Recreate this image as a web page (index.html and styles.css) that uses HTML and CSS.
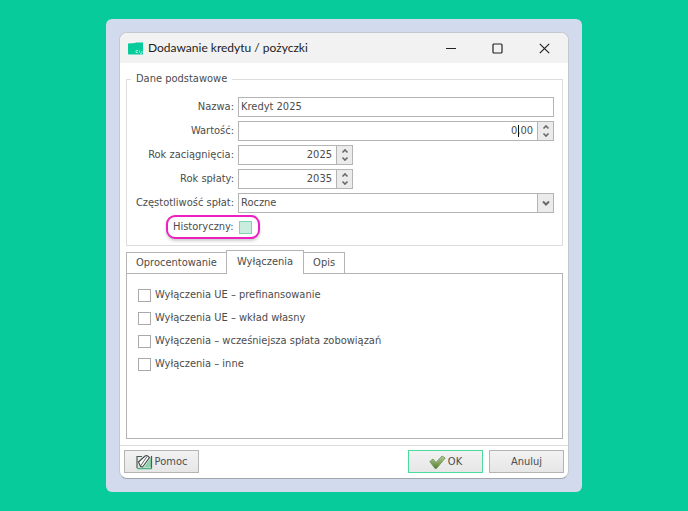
FILE: index.html
```html
<!DOCTYPE html>
<html lang="pl">
<head>
    <meta charset="UTF-8">
    <meta name="viewport" content="width=device-width, initial-scale=1">
    <title>Dodawanie kredytu / pożyczki</title>
    <link rel="stylesheet" href="styles.css">
</head>
<body>
    <main class="backdrop">
        <form class="window">
            <header class="titlebar">
                <svg class="app-icon" viewBox="0 0 16 13" aria-hidden="true">
                    <path d="M0 1.500 L7 1 L8 .5 H15 V12.500 H.5 L0 12 Z" fill="#08cb9c"/>
                    <path d="M8 8.500h2M8 8.500v2h2M11.500 8.500v2M14 9v2l-2 .5" fill="none" stroke="#b5f0e0" stroke-width=".8"/>
                </svg>
                <h1 class="title">Dodawanie kredytu / pożyczki</h1>
                <button type="button" class="window-button" aria-label="Minimalizuj">
                    <svg viewBox="0 0 11 11"><path d="M1 5.500h10"/></svg>
                </button>
                <button type="button" class="window-button" aria-label="Maksymalizuj">
                    <svg viewBox="0 0 11 11"><rect x="1" y="1" width="9" height="9" rx="1"/></svg>
                </button>
                <button type="button" class="window-button" aria-label="Zamknij">
                    <svg viewBox="0 0 11 11"><path d="M.8.8l9.400 9.400M10.200.8L.8 10.200"/></svg>
                </button>
            </header>

            <div class="content">
                <fieldset class="group">
                    <legend>Dane podstawowe</legend>
                    <div class="row">
                        <label for="name">Nazwa:</label>
                        <div class="field"><input type="text" id="name" value="Kredyt 2025"></div>
                    </div>
                    <div class="row">
                        <label for="amount">Wartość:</label>
                        <div class="field">
                            <input type="text" id="amount" class="number" value="0,00">
                            <span class="caret"></span>
                            <button type="button" class="spin" aria-label="Zmień wartość">
                                <svg viewBox="0 0 8 14"><path d="M1.500 4.500L4 2l2.500 2.500M1.500 9.500L4 12l2.500-2.500"/></svg>
                            </button>
                        </div>
                    </div>
                    <div class="row">
                        <label for="yearFrom">Rok zaciągnięcia:</label>
                        <div class="field short">
                            <input type="text" id="yearFrom" class="number" value="2025">
                            <button type="button" class="spin" aria-label="Zmień rok zaciągnięcia">
                                <svg viewBox="0 0 8 14"><path d="M1.500 4.500L4 2l2.500 2.500M1.500 9.500L4 12l2.500-2.500"/></svg>
                            </button>
                        </div>
                    </div>
                    <div class="row">
                        <label for="yearTo">Rok spłaty:</label>
                        <div class="field short">
                            <input type="text" id="yearTo" class="number" value="2035">
                            <button type="button" class="spin" aria-label="Zmień rok spłaty">
                                <svg viewBox="0 0 8 14"><path d="M1.500 4.500L4 2l2.500 2.500M1.500 9.500L4 12l2.500-2.500"/></svg>
                            </button>
                        </div>
                    </div>
                    <div class="row">
                        <label for="frequency">Częstotliwość spłat:</label>
                        <div class="field">
                            <select id="frequency">
                                <option>Roczne</option>
                            </select>
                            <span class="spin arrow">
                                <svg viewBox="0 0 8 14"><path d="M1 5.500L4 8.500l3-3"/></svg>
                            </span>
                        </div>
                    </div>
                    <div class="row">
                        <div class="highlight">
                            <label for="historic">Historyczny:</label>
                            <input type="checkbox" id="historic" class="check tinted">
                        </div>
                    </div>
                </fieldset>

                <div class="tabs" role="tablist">
                    <button type="button" class="tab" role="tab">Oprocentowanie</button>
                    <button type="button" class="tab active" role="tab" aria-selected="true">Wyłączenia</button>
                    <button type="button" class="tab" role="tab">Opis</button>
                </div>
                <div class="pane" role="tabpanel">
                    <label class="option"><input type="checkbox" class="check">Wyłączenia UE – prefinansowanie</label>
                    <label class="option"><input type="checkbox" class="check">Wyłączenia UE – wkład własny</label>
                    <label class="option"><input type="checkbox" class="check">Wyłączenia – wcześniejsza spłata zobowiązań</label>
                    <label class="option"><input type="checkbox" class="check">Wyłączenia – inne</label>
                </div>
            </div>

            <footer class="footer">
                <button type="button" class="button help">
                    <svg class="button-icon" viewBox="0 0 17 16" aria-hidden="true">
                        <path d="M1 2.500h14.500v11.500H1z" fill="#dcefe6"/>
                        <path d="M8 13l7.500-10v10z" fill="#8fd3ac"/>
                        <path d="M1 14V2.500h5M15.500 2v12" fill="none" stroke="#555" stroke-width="1.2"/>
                        <path d="M1 14.500h15" stroke="#4faf83" stroke-width="1.600"/>
                        <path d="M2.500 8l2 4.500 2 .5L13.500 3.500 11 1.500 9 2z" fill="#fff" stroke="#444" stroke-width="1.1"/>
                        <path d="M4.500 12L11 2.500" fill="none" stroke="#555" stroke-width=".9"/>
                    </svg>
                    Pomoc
                </button>
                <button type="submit" class="button primary">
                    <svg class="button-icon" viewBox="0 0 17 16" aria-hidden="true">
                        <defs>
                            <linearGradient id="tick" x1="0" y1="0" x2="0" y2="1">
                                <stop offset="0" stop-color="#b5cf9d"/>
                                <stop offset="1" stop-color="#54802f"/>
                            </linearGradient>
                        </defs>
                        <path d="M.8 7.500l3.200-2.500 3 3.500 6-6.500 3.200 2-8.700 10.500H6z" fill="url(#tick)" stroke="#6f8f54" stroke-width=".8"/>
                    </svg>
                    OK
                </button>
                <button type="button" class="button">Anuluj</button>
            </footer>
        </form>
    </main>
</body>
</html>
```
FILE: styles.css
```css
* {
    box-sizing: border-box;
}

body {
    margin: 0;
    padding: 19px;
    background-color: #08cb9c;
    font-family: "DejaVu Sans Condensed", "Noto Sans", sans-serif;
    font-size: 11px;
    line-height: 16px;
    color: #4c4c4c;
}

button,
input,
select {
    margin: 0;
    font: inherit;
    color: inherit;
}

.backdrop {
    max-width: 476px;
    margin: 0 auto;
    padding: 13px;
    background-color: #d2dbed;
    border-radius: 6px;
}

.window {
    border: 1px solid #c4c8d0;
    border-bottom-color: #a2a5aa;
    border-radius: 8px;
    background-color: #fff;
    overflow: hidden;
}

.titlebar {
    display: flex;
    align-items: center;
    height: 30px;
    padding-left: 8px;
    background-color: #f2f2f2;
}

.app-icon {
    width: 16px;
    height: 13px;
    margin-right: 4px;
}

.title {
    flex: 1;
    margin: 0;
    font-family: Lato, "Noto Sans", sans-serif;
    font-size: 12px;
    font-weight: 400;
    color: #1c1c1c;
}

.window-button {
    width: 47px;
    height: 30px;
    padding: 0;
    border: none;
    background: none;
}

.window-button svg {
    display: block;
    width: 11px;
    height: 11px;
    margin: 0 auto;
    fill: none;
    stroke: #222;
    stroke-width: 1.2;
}

.content {
    padding: 8px 5px 6px 6px;
}

/* Basic data */
.group {
    display: flex;
    flex-direction: column;
    gap: 4px;
    margin: 0;
    padding: 10px 8px 8px;
    border: 1px solid #dcdcdc;
}

.group legend {
    padding: 0 5px;
    margin-left: -4px;
}

.row {
    display: flex;
    align-items: center;
    min-height: 20px;
}

.row > label {
    width: 99px;
    margin-right: 4px;
    text-align: right;
    white-space: nowrap;
}

.field {
    position: relative;
    display: flex;
    flex: 1;
    height: 20px;
    border: 1px solid #b4b4b4;
    background-color: #fff;
}

.field.short {
    flex: none;
    width: 115px;
}

.field input,
.field select {
    flex: 1;
    min-width: 0;
    padding: 0 2px;
    border: none;
    outline: none;
    background: none;
    appearance: none;
}

.field .number {
    padding-right: 4px;
    text-align: right;
}

.caret {
    position: absolute;
    top: 3px;
    right: 34px;
    width: 1px;
    height: 12px;
    background-color: #111;
}

.spin {
    display: flex;
    align-items: center;
    justify-content: center;
    width: 16px;
    padding: 0;
    border: none;
    border-left: 1px solid #b4b4b4;
    background-color: #ebebeb;
}

.spin svg {
    width: 8px;
    height: 14px;
    fill: none;
    stroke: #6a6a6a;
    stroke-width: 1.6;
}

.arrow {
    pointer-events: none;
}

.arrow svg {
    stroke-width: 2;
}

.highlight {
    display: flex;
    align-items: center;
    gap: 5px;
    height: 24px;
    margin: -2px 0 -2px 31px;
    padding: 0 6px 0 5px;
    border: 2px solid #ee1fc0;
    border-radius: 9px;
    background-color: #fff;
    box-shadow: 0 2px 3px rgba(0, 0, 0, 0.2);
}

.check {
    width: 13px;
    height: 13px;
    border: 1px solid #aaa;
    background-color: #fff;
    appearance: none;
}

.check.tinted {
    border-color: #7fd4b5;
    background-color: #c9eddf;
}

/* Tabs */
.tabs {
    display: flex;
    align-items: flex-end;
    margin-top: 4px;
}

.tab {
    height: 21px;
    padding: 0 9px;
    border: 1px solid #b4b4b4;
    border-bottom: none;
    background-color: #fff;
}

.tab + .tab {
    border-left: none;
}

.tab.active {
    position: relative;
    height: 24px;
    margin: 0 0 -1px -1px;
    padding: 0 10px 2px;
    border-left: 1px solid #b4b4b4;
}

.pane {
    display: flex;
    flex-direction: column;
    gap: 7px;
    min-height: 166px;
    padding: 13px 11px;
    border: 1px solid #b4b4b4;
}

.option {
    display: flex;
    align-items: center;
    gap: 4px;
}

/* Buttons */
.footer {
    display: flex;
    gap: 6px;
    padding: 4px 4px 5px;
    border-top: 1px solid #dcdcdc;
}

.button {
    display: flex;
    align-items: center;
    justify-content: center;
    gap: 2px;
    width: 75px;
    height: 23px;
    padding: 0;
    border: 1px solid #b4b4b4;
    background: linear-gradient(#f2f2f2, #e6e6e6);
}

.button-icon {
    width: 17px;
    height: 16px;
}

.help {
    margin-right: auto;
}

.primary {
    border-color: #4bdc9c;
}
```
